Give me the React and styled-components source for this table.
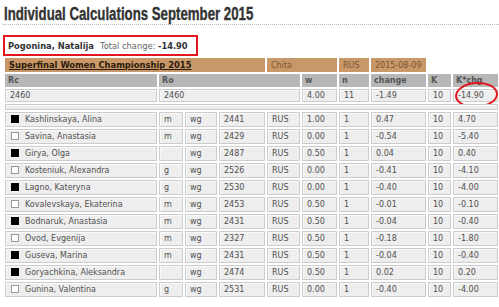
import React from 'react'
import styled, { createGlobalStyle } from 'styled-components'

const GlobalStyle = createGlobalStyle`
  html, body {
    margin: 0;
    padding: 0;
    background: #fff;
  }
  body {
    font-family: "DejaVu Sans", Verdana, sans-serif;
    font-size: 8px;
    color: #555;
  }
`

const Page = styled.div`
  width: 499px;
  height: 307px;
  overflow: hidden;
  padding: 0 0 0 3px;
  box-sizing: border-box;
`

const TitleBar = styled.div`
  padding-top: 4px;
  height: 20px;
  border-bottom: 1px dotted #bbb;
`

const Title = styled.h1`
  display: inline-block;
  margin: 0 0 0 1px;
  font-family: "Liberation Sans", Arial, sans-serif;
  font-size: 18px;
  line-height: 20px;
  font-weight: bold;
  color: #333;
  -webkit-text-stroke: 0.35px #333;
  white-space: nowrap;
  transform: scaleX(0.735);
  transform-origin: left center;
`

const PlayerBox = styled.div`
  display: inline-flex;
  align-items: center;
  gap: 6px;
  margin-top: 10px;
  height: 17px;
  padding: 0 8px 0 3px;
  border: 2px solid #e3161e;
  font-size: 8.3px;
`

const PlayerName = styled.b`
  color: #333;
`

const TotalLabel = styled.span`
  color: #666;
  b {
    color: #333;
  }
`

const Table = styled.table`
  border-collapse: separate;
  border-spacing: 2px;
  margin: 0;
  width: 497px;
  table-layout: fixed;
`

const Cell = styled.td`
  height: ${p => p.$h || 14}px;
  padding: 0 0 0 4px;
  box-sizing: border-box;
  background: #eeeeee;
  border: 1px solid #cccccc;
  box-shadow: inset 1px 1px 0 #fafafa;
  color: #505050;
  white-space: nowrap;
  overflow: visible;
  position: relative;
`

const HeadCell = styled.th`
  height: 13px;
  padding: 0 0 0 3px;
  box-sizing: border-box;
  background: #b7b7b7;
  color: #555;
  text-align: left;
  font-weight: bold;
  white-space: nowrap;
`

const TanCell = styled.td`
  height: 14px;
  padding: 0 0 0 4px;
  box-sizing: border-box;
  background: #c99868;
  color: ${p => (p.$strong ? '#2b1b0c' : '#7a5634')};
  font-size: ${p => (p.$strong ? '8.4px' : '8px')};
  font-weight: ${p => (p.$strong ? 'bold' : 'normal')};
  text-decoration: ${p => (p.$strong ? 'underline' : 'none')};
  white-space: nowrap;
`

const Square = styled.span`
  display: inline-block;
  width: 8px;
  height: 8px;
  margin: 0 6px 0 1px;
  vertical-align: -1px;
  background: ${p => (p.$black ? '#000' : '#fff')};
  border: 1px solid ${p => (p.$black ? '#000' : '#999')};
  box-sizing: border-box;
`

const Circle = styled.span`
  position: absolute;
  left: 1px;
  top: -8px;
  width: 43px;
  height: 26px;
  border: 2px solid #e3161e;
  border-radius: 50%;
  box-sizing: border-box;
  transform: rotate(-4deg);
`

const widths = [152, 24, 32, 46, 33, 35, 30, 55, 23, 45]

const players = [
  ['Kashlinskaya, Alina', true, 'm', '2441', '1.00', '0.47', '4.70'],
  ['Savina, Anastasia', false, 'm', '2429', '0.00', '-0.54', '-5.40'],
  ['Girya, Olga', true, '', '2487', '0.50', '0.04', '0.40'],
  ['Kosteniuk, Alexandra', false, 'g', '2526', '0.00', '-0.41', '-4.10'],
  ['Lagno, Kateryna', true, 'g', '2530', '0.00', '-0.40', '-4.00'],
  ['Kovalevskaya, Ekaterina', false, 'm', '2453', '0.50', '-0.01', '-0.10'],
  ['Bodnaruk, Anastasia', true, 'm', '2431', '0.50', '-0.04', '-0.40'],
  ['Ovod, Evgenija', false, 'm', '2327', '0.50', '-0.18', '-1.80'],
  ['Guseva, Marina', true, 'm', '2431', '0.50', '-0.04', '-0.40'],
  ['Goryachkina, Aleksandra', true, '', '2474', '0.50', '0.02', '0.20'],
  ['Gunina, Valentina', false, 'g', '2531', '0.00', '-0.40', '-4.00'],
]

export default function App() {
  return (
    <Page>
      <GlobalStyle />
      <TitleBar>
        <Title>Individual Calculations September 2015</Title>
      </TitleBar>
      <PlayerBox>
        <PlayerName>Pogonina, Natalija</PlayerName>
        <TotalLabel>
          Total change: <b>-14.90</b>
        </TotalLabel>
      </PlayerBox>
      <Table>
        <colgroup>
          {widths.map((w, i) => (
            <col key={i} style={{ width: w }} />
          ))}
        </colgroup>
        <tbody>
          <tr>
            <TanCell colSpan={4} $strong>Superfinal Women Championship 2015</TanCell>
            <TanCell colSpan={2}>Chita</TanCell>
            <TanCell>RUS</TanCell>
            <TanCell>2015-08-09</TanCell>
            <td />
            <td />
          </tr>
          <tr>
            <HeadCell>Rc</HeadCell>
            <HeadCell colSpan={4}>Ro</HeadCell>
            <HeadCell>w</HeadCell>
            <HeadCell>n</HeadCell>
            <HeadCell>change</HeadCell>
            <HeadCell>K</HeadCell>
            <HeadCell>K*chg</HeadCell>
          </tr>
          <tr>
            <Cell $h={13}>2460</Cell>
            <Cell $h={13} colSpan={4}>2460</Cell>
            <Cell $h={13}>4.00</Cell>
            <Cell $h={13}>11</Cell>
            <Cell $h={13}>-1.49</Cell>
            <Cell $h={13}>10</Cell>
            <Cell $h={13}>
              -14.90
              <Circle />
            </Cell>
          </tr>
          <tr>
            <Cell colSpan={10} $h={6} />
          </tr>
          {players.map(([name, black, title, elo, w, chg, kchg]) => (
            <tr key={name}>
              <Cell $h={15}>
                <Square $black={black} />
                {name}
              </Cell>
              <Cell $h={15}>{title}</Cell>
              <Cell $h={15}>wg</Cell>
              <Cell $h={15}>{elo}</Cell>
              <Cell $h={15}>RUS</Cell>
              <Cell $h={15}>{w}</Cell>
              <Cell $h={15}>1</Cell>
              <Cell $h={15}>{chg}</Cell>
              <Cell $h={15}>10</Cell>
              <Cell $h={15}>{kchg}</Cell>
            </tr>
          ))}
        </tbody>
      </Table>
    </Page>
  )
}
